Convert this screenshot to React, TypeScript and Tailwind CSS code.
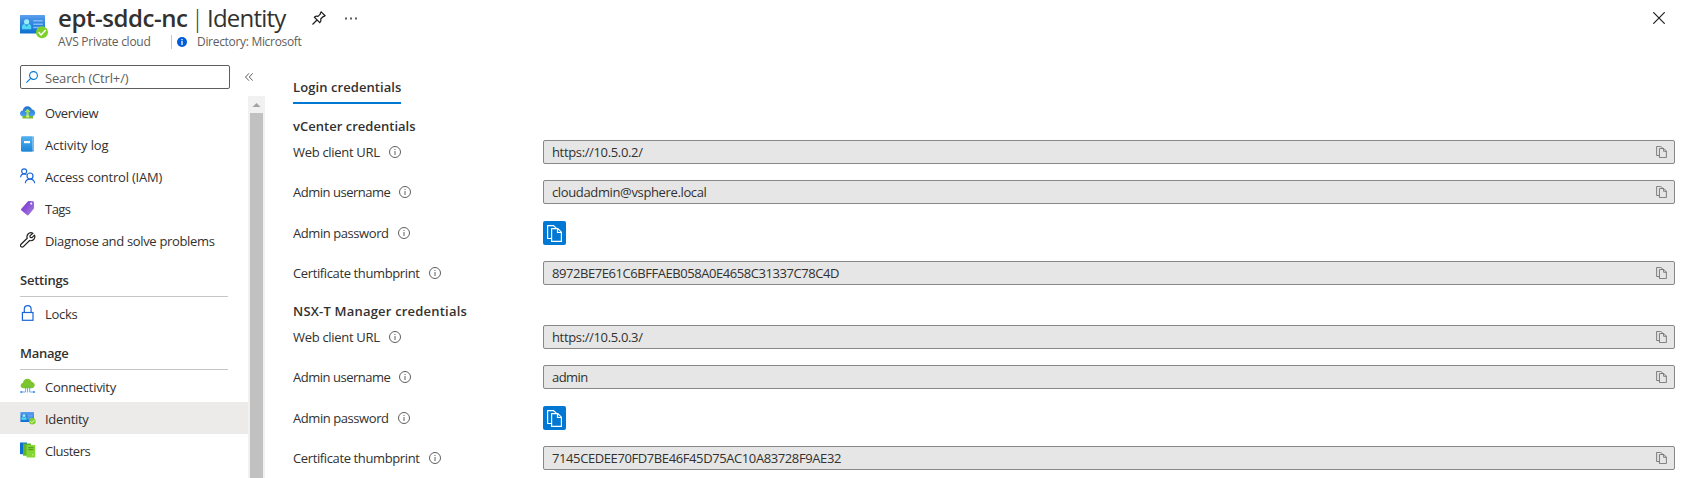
import type { ReactNode } from "react";
import clsx from "clsx";

function IdentityIcon({ className }: { className?: string }) {
  return (
    <svg viewBox="0 0 28 24" className={className}>
      <defs>
        <linearGradient id="card" x1="0" y1="0" x2="0" y2="1">
          <stop offset="0" stopColor="#5ea0ef" />
          <stop offset="0.25" stopColor="#3f8fe3" />
          <stop offset="1" stopColor="#0f70d0" />
        </linearGradient>
      </defs>
      <rect x="0" y="0" width="25" height="18.6" rx="0.6" fill="url(#card)" />
      <circle cx="6.6" cy="6.8" r="2.6" fill="#9cebff" />
      <path d="M2 14.200V11.600c0-1.600 1.200-2.600 2.600-2.600l2 2.600 2-2.600c1.400 0 2.600 1 2.600 2.600V14.200z" fill="#50d9f2" />
      <path d="M13.200 5.800h9.600M13.200 9.200h9.600M13.200 12.600h9.600" stroke="#83b9f9" strokeWidth="1.500" />
      <circle cx="22" cy="17.300" r="6" fill="#7fd02b" />
      <path d="M18.600 17.200l2.500 2.700 4.600-5" stroke="#fff" strokeWidth="1.500" fill="none" />
    </svg>
  );
}

function PinIcon() {
  return (
    <svg viewBox="0 0 14 14" className="size-3.5" fill="none" stroke="#201f1e" strokeWidth="1.200">
      <path d="M9.200 0.900l3.900 3.900-1.200 0.900-0.700-0.200L8.700 8c0.500 1.500 0.200 2.600-0.900 3.600L2.400 6.200C3.400 5.200 4.600 4.900 6 5.300l2.500-2.500-0.200-0.700zM5 9L0.500 13.500" />
    </svg>
  );
}

function CopyIcon({ className, strokeWidth }: { className: string; strokeWidth: number }) {
  return (
    <svg viewBox="0 0 15 17" className={className} fill="none" stroke="currentColor" strokeWidth={strokeWidth}>
      <path d="M4 13.500H0.600V0.600H6.500L9.500 3.400" />
      <path d="M4.600 3.600H10.800L14.400 7.200V16.400H4.600zM10.500 3.600V7.500H14.400" />
    </svg>
  );
}

function InfoIcon() {
  return (
    <svg viewBox="0 0 12 12" className="size-3 shrink-0">
      <circle cx="6" cy="6" r="5.500" fill="none" stroke="#605e5c" />
      <path d="M6 5v4" stroke="#605e5c" strokeWidth="1" />
      <path d="M6 3v1" stroke="#605e5c" strokeWidth="1" />
    </svg>
  );
}

const svg = "size-4 shrink-0";

const overviewIcon = (
  <svg viewBox="0 0 16 16" className={svg}>
    <defs>
      <linearGradient id="cloud" x1="0" y1="0" x2="0" y2="1">
        <stop offset="0" stopColor="#1c6fd0" />
        <stop offset="1" stopColor="#4fa3f0" />
      </linearGradient>
    </defs>
    <path d="M3.600 12.500C1.500 12.500 0 11.200 0 9.400 0 7.800 1.200 6.600 2.800 6.400 3.100 4.200 5 2.300 7.400 2.300c2.200 0 3.900 1.300 4.600 3.300 1.800.2 3.100 1.600 3.100 3.400 0 2-1.500 3.500-3.500 3.500z" fill="url(#cloud)" />
    <path d="M7.600 4.800l3 3.200H8.700v4H6.500V8H4.600z" fill="#a4e04a" />
    <rect x="2.500" y="12" width="10.500" height="2.500" fill="#76bc2d" />
    <rect x="6.300" y="11.300" width="2.600" height="2.200" fill="#d3f08a" />
  </svg>
);

const logIcon = (
  <svg viewBox="0 0 16 16" className={svg}>
    <defs>
      <linearGradient id="book" x1="0" y1="0" x2="0" y2="1">
        <stop offset="0" stopColor="#50b0f0" />
        <stop offset="1" stopColor="#1b86d6" />
      </linearGradient>
    </defs>
    <rect x="1.500" y="0.500" width="12.500" height="15" rx="1" fill="#4a9bd8" />
    <rect x="2.200" y="1.300" width="11.200" height="13.200" rx="0.500" fill="#c9e3f7" />
    <path d="M1 1.500Q1 .5 2 .5h9.700q.9 0 .9.900v13.200q0 .9-.9.900H2q-1 0-1-1z" fill="url(#book)" />
    <rect x="4" y="5" width="6" height="2.200" fill="#fff" />
  </svg>
);

const iamIcon = (
  <svg viewBox="0 0 16 16" className={svg} fill="none" stroke="#1b66d8" strokeWidth="1.200">
    <circle cx="4.200" cy="3.300" r="2.500" />
    <path d="M0.600 9.200c.2-2 1.600-3.400 3.500-3.400 1 0 1.800.3 2.400.9" />
    <circle cx="10" cy="8" r="3" />
    <path d="M5.300 15.300c.2-2.500 2-4.200 4.600-4.200s4.500 1.700 4.800 4.200" />
  </svg>
);

const tagIcon = (
  <svg viewBox="0 0 16 16" className={svg}>
    <defs>
      <linearGradient id="tag" x1="0" y1="0" x2="1" y2="1">
        <stop offset="0" stopColor="#7433d6" />
        <stop offset="0.450" stopColor="#8a52d6" />
        <stop offset="1" stopColor="#a884e0" />
      </linearGradient>
    </defs>
    <path d="M8 1.300Q8.400.9 9 .9l3.700.3q1.200.1 1.200 1.300l.1 5.200q0 .7-.4 1.200l-5 6q-.8.900-1.700.2L1.500 10.600q-1-.9-.1-1.800z" fill="url(#tag)" />
    <circle cx="11.200" cy="3.600" r="1.100" fill="#f3ecfc" />
  </svg>
);

const wrenchIcon = (
  <svg viewBox="0 0 16 16" className={svg} fill="none" stroke="#201f1e" strokeWidth="1.200" strokeLinejoin="round">
    <path d="M12.900 1.200C11.200.4 9.300.7 8.100 2c-1.100 1.200-1.400 2.700-.9 4.200L1 12.300c-.7.700-.7 1.700 0 2.300.7.700 1.700.7 2.400 0l6.200-6.100c1.500.5 3 .1 4.100-1 1.200-1.200 1.400-2.900.8-4.400L12 5.600 10.200 5.300 9.900 3.900z" />
  </svg>
);

const lockIcon = (
  <svg viewBox="0 0 16 16" className={svg} fill="none" stroke="#1b66d8" strokeWidth="1.200">
    <rect x="2.400" y="7.500" width="10.600" height="7.800" />
    <path d="M4.300 7.500V4c0-2 1.500-3.400 3.400-3.400S11.100 2 11.100 4v3.500" />
  </svg>
);

const connectivityIcon = (
  <svg viewBox="0 0 16 16" className={svg}>
    <path d="M3.600 10.200C1.800 10.200.6 9.100.6 7.500c0-1.300 1-2.400 2.300-2.600C3.200 2.500 5 .7 7.400.7c2.100 0 3.800 1.300 4.400 3.300 1.700.2 2.900 1.400 2.900 3 0 1.800-1.300 3.200-3.200 3.200z" fill="#7cc62c" />
    <path d="M5.600 8v6H1.500M9.700 8v6h4.200M7.600 7v7.500" stroke="#5ea0ef" strokeWidth="0.900" fill="none" />
    <g fill="#3c8ee6">
      <circle cx="1.300" cy="14" r="1.100" />
      <circle cx="14" cy="14" r="1.100" />
    </g>
  </svg>
);

const clustersIcon = (
  <svg viewBox="0 0 16 16" className={svg}>
    <path d="M0 0.500h7v11.700H0z" fill="#0f6fd0" />
    <path d="M3 1.500h8v12.200H3z" fill="#5fb52a" />
    <path d="M6.500 3h8.700v12.500H6.500z" fill="#86d633" />
    <path d="M8.200 5.600h5.400M8.200 7.600h5.400" stroke="#5a9f22" strokeWidth="1.100" />
    <circle cx="12.900" cy="12.800" r="0.800" fill="#c8f08a" />
  </svg>
);

function NavItem({ icon, label, tracking, active }: { icon: ReactNode; label: string; tracking: string; active?: boolean }) {
  return (
    <a className={clsx("flex h-8 items-center gap-[9px] pl-5", active && "bg-[#edebe9]")}>
      {icon}
      <span className={clsx("pt-0.5 leading-5", tracking)}>{label}</span>
    </a>
  );
}

function NavHeading({ label, tracking }: { label: string; tracking: string }) {
  return (
    <h3 className={clsx("mr-5 ml-5 flex h-[41px] items-center border-b border-[#c8c6c4] pt-[8px] font-semibold leading-5", tracking)}>
      {label}
    </h3>
  );
}

function Label({ text, tracking }: { text: string; tracking: string }) {
  return (
    <div className="flex w-[250px] shrink-0 items-center gap-[9px]">
      <span className={tracking}>{text}</span>
      <InfoIcon />
    </div>
  );
}

type FieldProps = { label: string; labelTracking: string; value?: string; tracking?: string; className?: string };

function Field({ label, labelTracking, value, tracking, className }: FieldProps) {
  return (
    <div className={clsx("flex h-6 items-center leading-5", className)}>
      <Label text={label} tracking={labelTracking} />
      {value ? (
        <div className="flex h-6 flex-1 items-center justify-between rounded-xs border border-[#8a8886] bg-[#e6e6e6] pr-[7px] pl-2">
          <span className={tracking}>{value}</span>
          <CopyIcon className="h-3 w-[11px] text-[#605e5c]" strokeWidth={1.1} />
        </div>
      ) : (
        <button className="flex h-6 w-[23px] items-center justify-center rounded-xs bg-[#0078d4] text-white">
          <CopyIcon className="h-[17px] w-[15px]" strokeWidth={1.2} />
        </button>
      )}
    </div>
  );
}

type Credentials = { title: string; titleTracking: string; url: string; user: string; userTracking: string; thumb: string; thumbTracking: string };

function CredentialGroup(c: Credentials) {
  return (
    <section>
      <h2 className={clsx("font-semibold leading-5", c.titleTracking)}>{c.title}</h2>
      <Field className="mt-[4px]" label="Web client URL" labelTracking="tracking-[-0.31px]" value={c.url} tracking="tracking-[-0.35px]" />
      <Field className="mt-4" label="Admin username" labelTracking="tracking-[-0.48px]" value={c.user} tracking={c.userTracking} />
      <Field className="mt-[17px]" label="Admin password" labelTracking="tracking-[-0.43px]" />
      <Field className="mt-4" label="Certificate thumbprint" labelTracking="tracking-[-0.38px]" value={c.thumb} tracking={c.thumbTracking} />
    </section>
  );
}

export default function App() {
  return (
    <div className="flex h-[478px] flex-col overflow-hidden bg-white font-['Open_Sans','Noto_Sans',sans-serif] text-[13px] text-[#323130]">
      <header className="flex h-[60px] shrink-0 items-start pl-5">
        <IdentityIcon className="mt-[15px] h-6 w-7" />
        <div className="ml-2.5 pt-0.5">
          <div className="flex h-8 items-center">
            <h1 className="flex text-[24px] leading-8 whitespace-nowrap">
              <span className="w-[133px] font-semibold tracking-[-0.44px]">ept-sddc-nc</span>
              <span className="w-4 font-light">|</span>
              <span className="w-[80px] tracking-[-0.8px]">Identity</span>
            </h1>
            <div className="ml-[25px] flex items-center gap-[19px]">
              <PinIcon />
              <svg viewBox="0 0 13 3" className="h-[3px] w-[13px]" fill="#605e5c">
                <rect x="0" y="0.500" width="2" height="2" />
                <rect x="5" y="0.500" width="2" height="2" />
                <rect x="10" y="0.500" width="2" height="2" />
              </svg>
            </div>
          </div>
          <div className="flex h-4 items-center text-[12px] leading-4 text-[#605e5c]">
            <span className="w-[113px] tracking-[-0.27px]">AVS Private cloud</span>
            <span className="h-3.5 w-px bg-[#c8c6c4]" />
            <svg viewBox="0 0 10 10" className="ml-[5px] size-2.5">
              <circle cx="5" cy="5" r="5" fill="#015cda" />
              <path d="M5 4v4M5 2v1.200" stroke="#fff" strokeWidth="1.300" />
            </svg>
            <span className="ml-2.5 tracking-[-0.31px]">Directory: Microsoft</span>
          </div>
        </div>
        <svg viewBox="0 0 12 12" className="mt-3 mr-[22px] ml-auto size-3" stroke="#201f1e" strokeWidth="1.200">
          <path d="M0.300 0.300l11.400 11.400M11.700 0.300L0.300 11.700" />
        </svg>
      </header>

      <div className="flex min-h-0 flex-1">
        <aside className="flex w-[265px] shrink-0 flex-col">
          <div className="flex h-9 shrink-0 items-start pt-[5px] pl-5">
            <div className="flex h-6 w-[210px] items-center gap-[7px] rounded-xs border border-[#605e5c] pl-[5px] text-[#605e5c]">
              <svg viewBox="0 0 12 12" className="size-3" fill="none" stroke="#0078d4" strokeWidth="1.100">
                <circle cx="7.500" cy="4.500" r="3.900" />
                <path d="M4.700 7.300L0.400 11.600" />
              </svg>
              <span className="pt-0.5 leading-5 tracking-[-0.16px]">Search (Ctrl+/)</span>
            </div>
            <svg viewBox="0 0 8 8" className="mt-2 ml-[15px] size-2" fill="none" stroke="#605e5c" strokeWidth="1">
              <path d="M4 0.300L0.500 4L4 7.700M7.800 0.300L4.300 4L7.800 7.700" />
            </svg>
          </div>
          <div className="flex min-h-0 flex-1">
            <nav className="w-[248px]">
              <NavItem icon={overviewIcon} label="Overview" tracking="tracking-[-0.40px]" />
              <NavItem icon={logIcon} label="Activity log" tracking="tracking-[-0.11px]" />
              <NavItem icon={iamIcon} label="Access control (IAM)" tracking="tracking-[-0.22px]" />
              <NavItem icon={tagIcon} label="Tags" tracking="tracking-[-0.53px]" />
              <NavItem icon={wrenchIcon} label="Diagnose and solve problems" tracking="tracking-[-0.33px]" />
              <NavHeading label="Settings" tracking="tracking-[-0.23px]" />
              <NavItem icon={lockIcon} label="Locks" tracking="tracking-[-0.27px]" />
              <NavHeading label="Manage" tracking="tracking-[-0.25px]" />
              <NavItem icon={connectivityIcon} label="Connectivity" tracking="tracking-[-0.28px]" />
              <NavItem icon={<IdentityIcon className="h-[13px] w-4 shrink-0" />} label="Identity" tracking="tracking-[-0.30px]" active />
              <NavItem icon={clustersIcon} label="Clusters" tracking="tracking-[-0.48px]" />
            </nav>
            <div className="flex w-[17px] flex-col items-center bg-[#f1f1f1]">
              <svg viewBox="0 0 17 17" className="h-[17px] w-[17px] shrink-0">
                <path d="M4.500 11L8.500 7L12.500 11z" fill="#a3a3a3" />
              </svg>
              <div className="w-[13px] flex-1 bg-[#c1c1c1]" />
            </div>
          </div>
        </aside>

        <main className="flex flex-1 flex-col pt-[17px] pr-3 pl-7">
          <div className="h-[27px] w-[108px] border-b-2 border-[#0078d4] font-semibold leading-5 tracking-[0.08px] whitespace-nowrap">
            Login credentials
          </div>
          <div className="mt-3 flex flex-col gap-4">
            <CredentialGroup
              title="vCenter credentials"
              titleTracking="tracking-[0.02px]"
              url="https://10.5.0.2/"
              user="cloudadmin@vsphere.local"
              userTracking="tracking-[-0.36px]"
              thumb="8972BE7E61C6BFFAEB058A0E4658C31337C78C4D"
              thumbTracking="tracking-[-0.44px]"
            />
            <CredentialGroup
              title="NSX-T Manager credentials"
              titleTracking="tracking-[0.20px]"
              url="https://10.5.0.3/"
              user="admin"
              userTracking="tracking-[-0.59px]"
              thumb="7145CEDEE70FD7BE46F45D75AC10A83728F9AE32"
              thumbTracking="tracking-[-0.40px]"
            />
          </div>
        </main>
      </div>
    </div>
  );
}
